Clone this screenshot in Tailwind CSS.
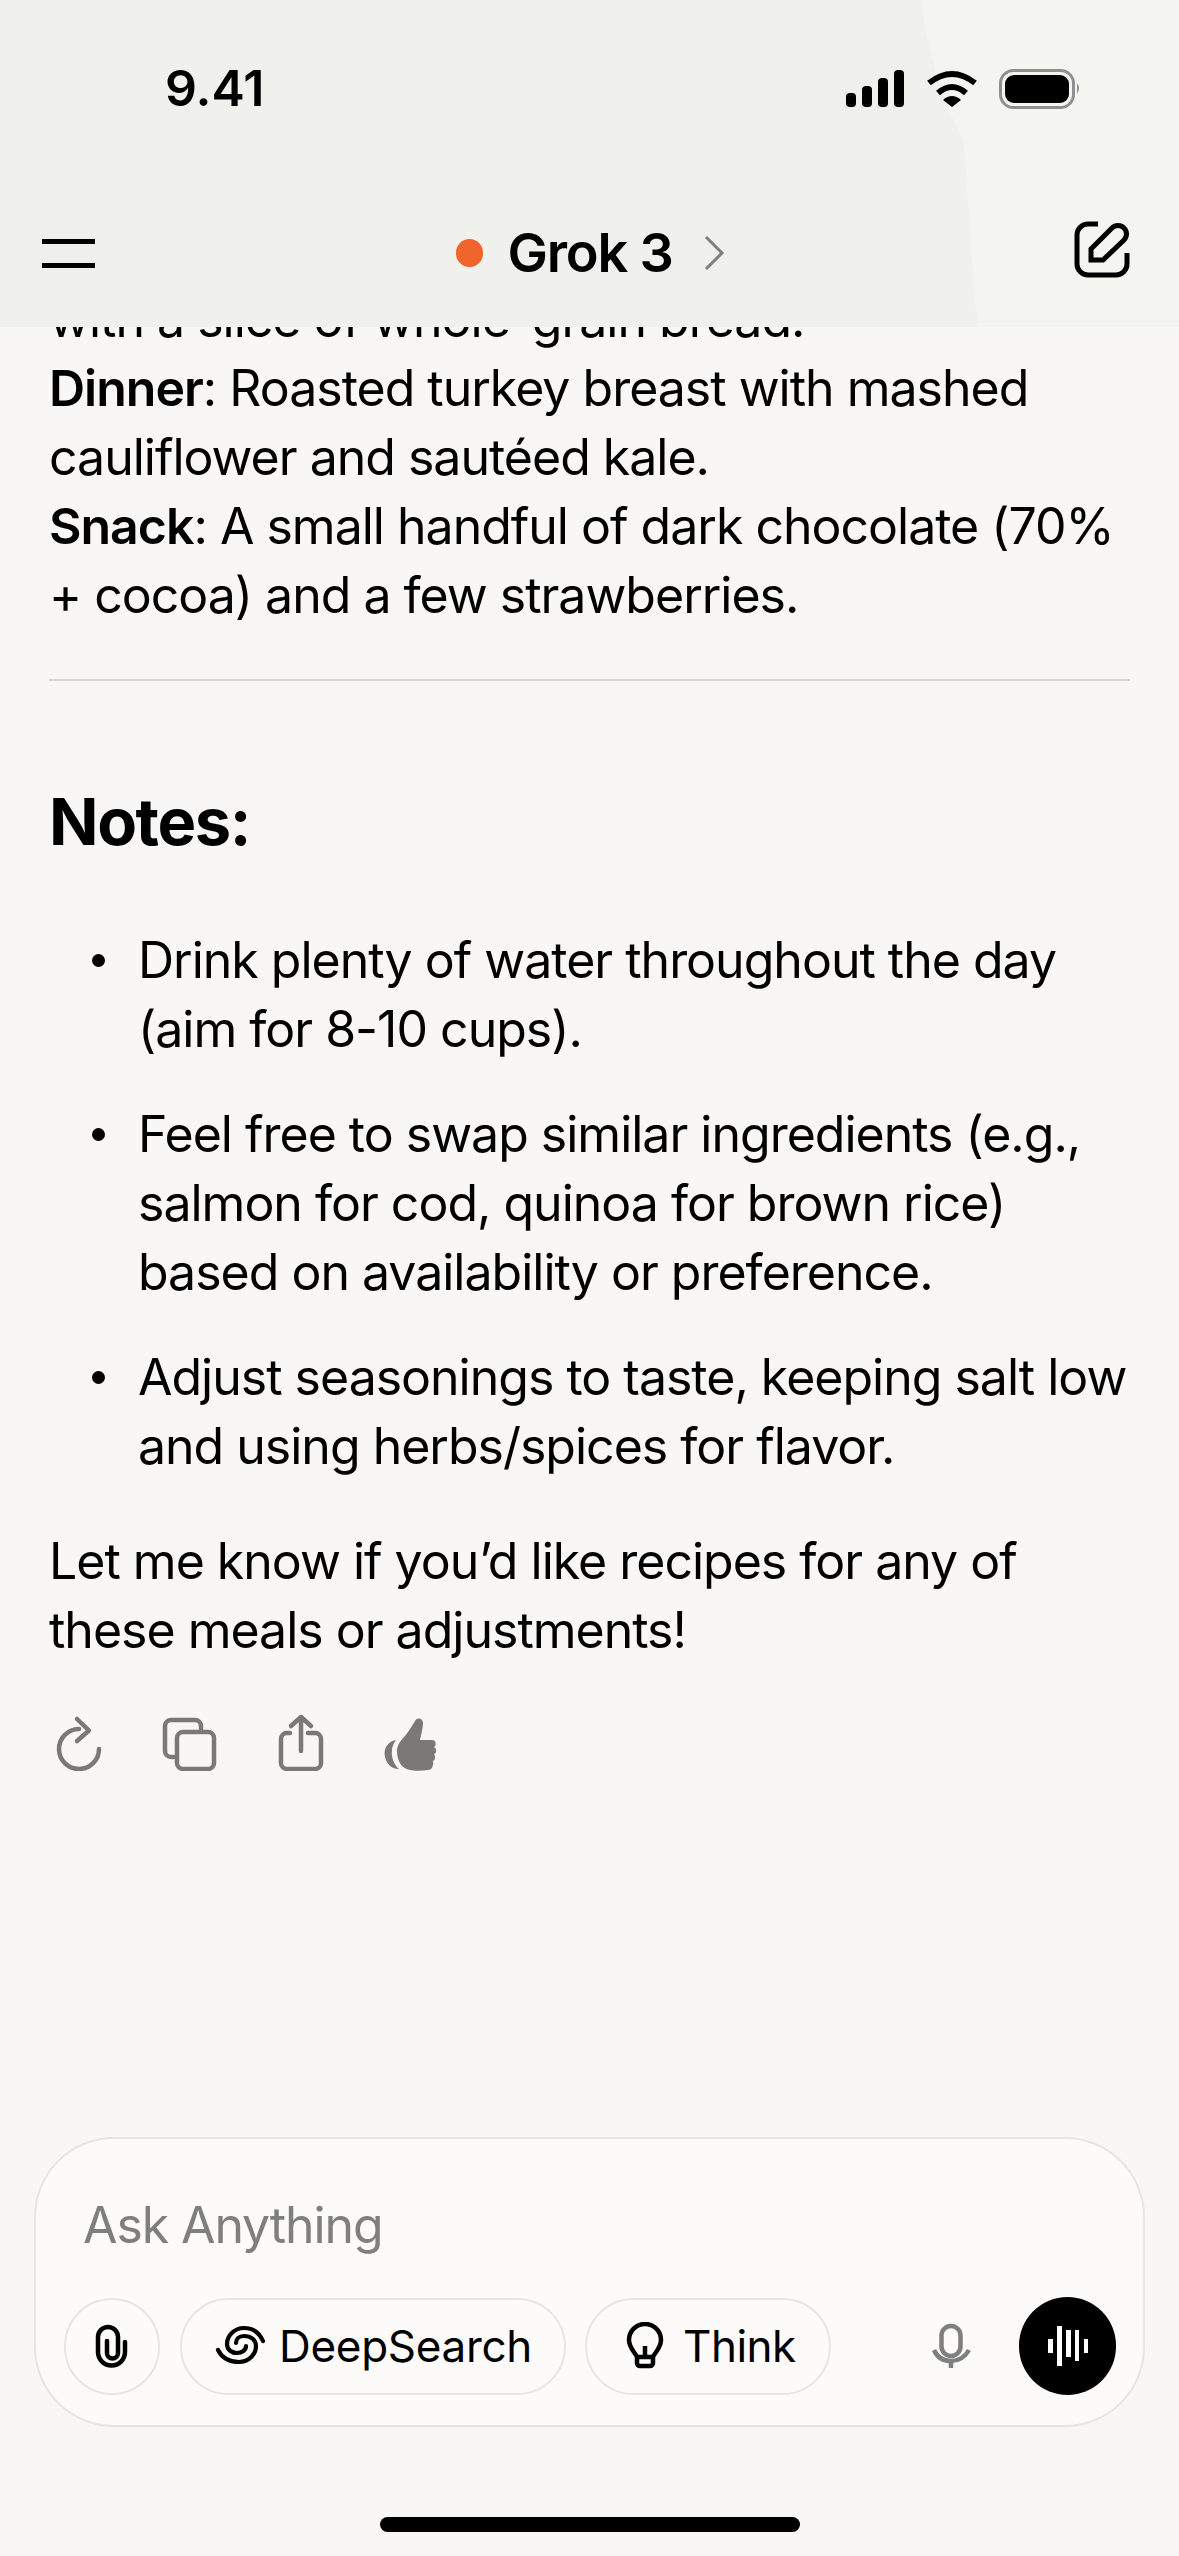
<!DOCTYPE html>
<html lang="en">
  <head>
    <meta charset="UTF-8" />
    <meta name="viewport" content="width=device-width, initial-scale=1.0" />
    <title>Grok 3</title>
    <script src="https://cdn.jsdelivr.net/npm/@tailwindcss/browser@4"></script>
  </head>
  <body>
    <div class="w-[1179px] h-[2556px] overflow-hidden flex flex-col bg-[#f8f7f5] text-black [font-family:Inter,sans-serif]">
      <!-- header -->
      <header class="relative h-[327px] shrink-0 bg-[#f4f5f1]">
        <svg class="absolute inset-0" width="1179" height="327" viewBox="0 0 1179 327">
          <path d="M0 0H921C926 50 945 105 963 140C968 175 970 260 978 327H0Z" fill="#f0f1ed" />
        </svg>
        <div class="relative h-[203px] pt-[60px] pl-[165px] pr-[97px] flex justify-between items-start">
          <span class="text-[50px] leading-[56px] font-semibold">9.41</span>
          <svg class="mt-[8px]" width="236" height="41" viewBox="846 67 236 41">
            <rect x="846" y="92" width="10" height="14" rx="4" />
            <rect x="862" y="85" width="10" height="21" rx="4" />
            <rect x="878" y="77" width="10" height="29" rx="4" />
            <rect x="894" y="69" width="10" height="37" rx="4" />
            <path d="M929 82Q952 64 975 82" fill="none" stroke="#000" stroke-width="6" />
            <path d="M938 92Q952 80 966 92" fill="none" stroke="#000" stroke-width="6" />
            <path d="M943 99Q952 91 961 99L952 106Z" />
            <rect x="1000.5" y="69.5" width="73" height="37" rx="13" fill="none" stroke="#8f8f8f" stroke-width="3" />
            <rect x="1005" y="74" width="64" height="28" rx="9" />
            <path d="M1077 82Q1081 87 1077 93Z" fill="#8f8f8f" />
          </svg>
        </div>
        <div class="relative h-[100px] pl-[42px] pr-[48px] flex justify-between items-center">
          <div class="w-[53px] flex flex-col gap-[19px]">
            <div class="h-[5px] bg-black"></div>
            <div class="h-[5px] bg-black"></div>
          </div>
          <div class="flex items-center ml-[13px]">
            <div class="w-[27px] h-[28px] rounded-full bg-[#f0642e] mr-[24px]"></div>
            <span class="text-[54px] leading-[64px] font-semibold tracking-[-1.2px]">Grok 3</span>
            <svg class="ml-[30px]" width="22" height="36" viewBox="0 0 22 36">
              <path d="M3 2L19 18L3 34" fill="none" stroke="#7f7f7d" stroke-width="3" />
            </svg>
          </div>
          <svg class="-mt-[6px]" width="58" height="58" viewBox="273 180 58 58">
            <path d="M298 183H288A11 11 0 0 0 277 194V223A11 11 0 0 0 288 234H316A11 11 0 0 0 327 223V212" fill="none" stroke="#000" stroke-width="5" />
            <path d="M291 219V208L312 187A6 6 0 0 1 324 199L303 219Z" fill="none" stroke="#000" stroke-width="5" />
          </svg>
        </div>
      </header>

      <!-- chat -->
      <main class="h-[1810px] shrink-0 overflow-hidden px-[49px] text-[50px] leading-[69px] tracking-[-1px]">
        <div class="-mt-[42px]">
          <p>with a slice of whole-grain bread.</p>
          <p><strong class="font-semibold">Dinner</strong>: Roasted turkey breast with mashed cauliflower and sautéed kale.</p>
          <p><strong class="font-semibold">Snack</strong>: A small handful of dark chocolate (70% + cocoa) and a few strawberries.</p>
          <hr class="mt-[49px] border-[#d8d7d4] border-t-2" />
          <h2 class="mt-[101px] text-[65px] leading-[80px] font-bold tracking-[-1.4px]">Notes:</h2>
          <ul class="mt-[64px] flex flex-col gap-[36px]">
            <li class="relative pl-[89px]">
              <span class="absolute left-[43px] top-[28px] w-[13px] h-[13px] rounded-full bg-black"></span>
              Drink plenty of water throughout the day (aim for 8-10 cups).
            </li>
            <li class="relative pl-[89px]">
              <span class="absolute left-[43px] top-[28px] w-[13px] h-[13px] rounded-full bg-black"></span>
              Feel free to swap similar ingredients (e.g., salmon for cod, quinoa for brown rice) based on availability or preference.
            </li>
            <li class="relative pl-[89px]">
              <span class="absolute left-[43px] top-[28px] w-[13px] h-[13px] rounded-full bg-black"></span>
              Adjust seasonings to taste, keeping salt low and using herbs/spices for flavor.
            </li>
          </ul>
          <p class="mt-[46px]">Let me know if you’d like recipes for any of these meals or adjustments!</p>
          <div class="mt-[46px] ml-px flex items-start">
            <svg width="60" height="60" viewBox="0 -4 60 60" fill="none" stroke="#7a7977" stroke-width="4.5" stroke-linecap="round" stroke-linejoin="round">
              <path d="M29 14A20 20 0 1 0 49 34" />
              <path d="M27 4L39 15.5L27 26" />
            </svg>
            <svg class="ml-[50px]" width="60" height="60" viewBox="0 -1 60 60" fill="none" stroke="#7a7977" stroke-width="4.5" stroke-linecap="round" stroke-linejoin="round">
              <path d="M14 45H11A6 6 0 0 1 5 39V14A6 6 0 0 1 11 8H35A6 6 0 0 1 41 14V17" />
              <rect x="17" y="20" width="37" height="37" rx="6" />
            </svg>
            <svg class="ml-[58px]" width="60" height="60" viewBox="0 -2 60 60" fill="none" stroke="#7a7977" stroke-width="4.5" stroke-linecap="round" stroke-linejoin="round">
              <path d="M12 20H9A6 6 0 0 0 3 26V50A6 6 0 0 0 9 56H37A6 6 0 0 0 43 50V26A6 6 0 0 0 37 20H30" />
              <path d="M23 38V4M13 13L23 4L33 13" />
            </svg>
            <svg class="ml-[42px]" width="60" height="60" viewBox="360 30 60 60" fill="#7a7977">
              <path d="M376 59C368 60 363 68 365 76C367 84 372 88 379 88C374 84 371 76 372 69C372 65 374 62 376 59Z" />
              <path d="M395 40C397 36 403 37 403 42C403 48 401 53 400 59H412C416 59 417 64 414 66C417 68 417 72 414 73C416 76 415 79 413 80C414 84 412 89 408 89C402 90 394 90 390 89C382 88 377 80 377 70C377 64 381 59 385 55C389 50 392 45 395 40Z" />
            </svg>
          </div>
        </div>
      </main>

      <!-- input -->
      <section class="h-[290px] shrink-0 mx-[34px] rounded-[80px] border-2 border-[#e6e5e2] bg-[#fcfbf9] flex flex-col">
        <p class="pt-[56px] pl-[47px] h-[158px] text-[50px] leading-[60px] text-[#7f7f7d] tracking-[-1.1px]">Ask Anything</p>
        <div class="flex items-center pl-[28px] pr-[27px]">
          <div class="w-[96px] h-[97px] rounded-full border-2 border-[#e6e5e2] flex items-center justify-center">
            <svg width="36" height="48" viewBox="95 2321 36 48" fill="none" stroke="#000" stroke-width="4.5" stroke-linecap="round">
              <path d="M126 2341V2351A13.5 13.5 0 0 1 99 2351V2336A10 10 0 0 1 119 2336V2352A5.5 5.5 0 0 1 108 2352V2340" />
            </svg>
          </div>
          <div class="ml-[20px] w-[386px] h-[97px] rounded-full border-2 border-[#e6e5e2] flex items-center pl-[33px]">
            <svg width="52" height="42" viewBox="214 2324 52 42" fill="none" stroke="#000" stroke-width="4.2" stroke-linecap="round">
              <path d="M262 2340C258 2331 251 2327 243 2327C233 2327 226 2335 226 2343C226 2349 231 2352 236 2352C241 2352 245 2349 245 2345" />
              <path d="M217 2349C221 2357 229 2361 238 2361C248 2361 255 2353 255 2345C255 2339 250 2335 243 2335C238 2335 235 2338 235 2342" />
            </svg>
            <span class="ml-[12px] text-[44px] tracking-[-0.3px] leading-[56px]">DeepSearch</span>
          </div>
          <div class="ml-[19px] w-[246px] h-[97px] rounded-full border-2 border-[#e6e5e2] flex items-center pl-[38px]">
            <svg width="40" height="48" viewBox="624 2321 40 48" fill="none" stroke="#000" stroke-width="4.5" stroke-linejoin="round">
              <path d="M636 2356C634 2351 628 2347 628 2339A16 16 0 0 1 660 2339C660 2347 654 2351 652 2356V2362A3 3 0 0 1 649 2365H639A3 3 0 0 1 636 2362Z" />
              <path d="M636 2356H652M644 2345V2356" />
            </svg>
            <span class="ml-[18px] text-[44px] tracking-[-0.5px] leading-[56px]">Think</span>
          </div>
          <svg class="ml-[100px]" width="40" height="48" viewBox="931 2321 40 48" fill="none" stroke="#7f7f7f" stroke-width="4.5">
            <rect x="941.5" y="2325" width="19" height="30" rx="9.5" />
            <path d="M934 2349C937 2356 943 2360 951 2360C959 2360 965 2356 969 2349M951 2360V2367" />
          </svg>
          <div class="ml-[48px] w-[97px] h-[98px] rounded-full bg-black flex items-center justify-center">
            <svg width="42" height="42" viewBox="1046 2324 42 42" fill="#fff">
              <rect x="1047" y="2338" width="5" height="14" />
              <rect x="1056" y="2325" width="5" height="40" />
              <rect x="1065" y="2329" width="5" height="27" />
              <rect x="1074" y="2329" width="4" height="31" />
              <rect x="1083" y="2338" width="4" height="14" />
            </svg>
          </div>
        </div>
      </section>

      <div class="mt-[90px] mx-auto w-[420px] h-[15px] rounded-full bg-black"></div>
    </div>
  </body>
</html>
